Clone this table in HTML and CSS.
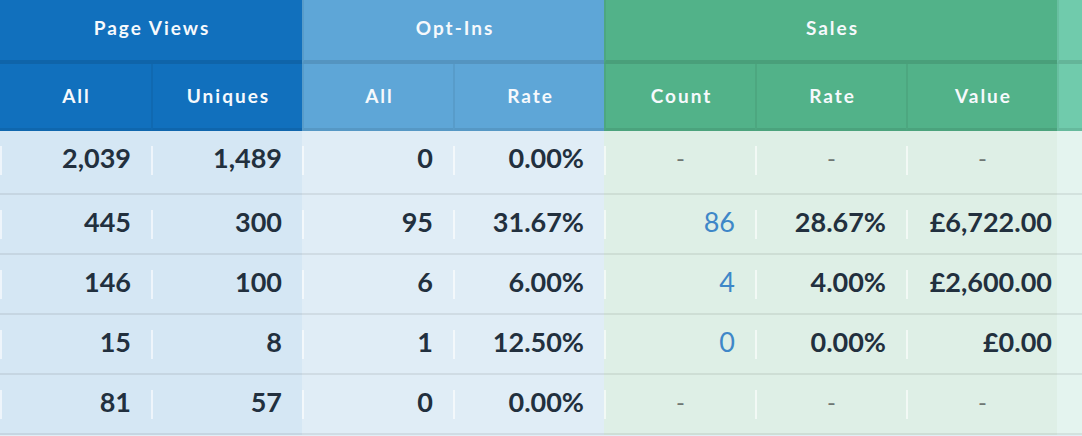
FILE: index.html
```html
<!DOCTYPE html>
<html lang="en">
<head>
<meta charset="utf-8">
<title>Funnel stats</title>
<link rel="stylesheet" href="styles.css">
</head>
<body>
<div class="stats">
  <div class="hrow groups">
    <div class="gh pv span2">Page Views</div>
    <div class="gh oi span2">Opt-Ins</div>
    <div class="gh sa span3">Sales</div>
    <div class="gh ex"></div>
  </div>
  <div class="hrow subs">
    <div class="sh pv">All</div>
    <div class="sh pv">Uniques</div>
    <div class="sh oi">All</div>
    <div class="sh oi">Rate</div>
    <div class="sh sa">Count</div>
    <div class="sh sa">Rate</div>
    <div class="sh sa">Value</div>
    <div class="sh ex"></div>
  </div>

  <div class="row first">
    <div class="cell pv"><span class="sep"></span><span class="val">2,039</span></div>
    <div class="cell pv"><span class="sep"></span><span class="val">1,489</span></div>
    <div class="cell oi"><span class="sep"></span><span class="val">0</span></div>
    <div class="cell oi"><span class="sep"></span><span class="val">0.00%</span></div>
    <div class="cell sa"><span class="sep"></span><span class="val dash">-</span></div>
    <div class="cell sa"><span class="sep"></span><span class="val dash">-</span></div>
    <div class="cell sa"><span class="sep"></span><span class="val dash">-</span></div>
    <div class="cell ex"></div>
  </div>
  <div class="row">
    <div class="cell pv"><span class="sep"></span><span class="val">445</span></div>
    <div class="cell pv"><span class="sep"></span><span class="val">300</span></div>
    <div class="cell oi"><span class="sep"></span><span class="val">95</span></div>
    <div class="cell oi"><span class="sep"></span><span class="val">31.67%</span></div>
    <div class="cell sa"><span class="sep"></span><span class="val link">86</span></div>
    <div class="cell sa"><span class="sep"></span><span class="val">28.67%</span></div>
    <div class="cell sa"><span class="sep"></span><span class="val money">£6,722.00</span></div>
    <div class="cell ex"></div>
  </div>
  <div class="row">
    <div class="cell pv"><span class="sep"></span><span class="val">146</span></div>
    <div class="cell pv"><span class="sep"></span><span class="val">100</span></div>
    <div class="cell oi"><span class="sep"></span><span class="val">6</span></div>
    <div class="cell oi"><span class="sep"></span><span class="val">6.00%</span></div>
    <div class="cell sa"><span class="sep"></span><span class="val link">4</span></div>
    <div class="cell sa"><span class="sep"></span><span class="val">4.00%</span></div>
    <div class="cell sa"><span class="sep"></span><span class="val money">£2,600.00</span></div>
    <div class="cell ex"></div>
  </div>
  <div class="row">
    <div class="cell pv"><span class="sep"></span><span class="val">15</span></div>
    <div class="cell pv"><span class="sep"></span><span class="val">8</span></div>
    <div class="cell oi"><span class="sep"></span><span class="val">1</span></div>
    <div class="cell oi"><span class="sep"></span><span class="val">12.50%</span></div>
    <div class="cell sa"><span class="sep"></span><span class="val link">0</span></div>
    <div class="cell sa"><span class="sep"></span><span class="val">0.00%</span></div>
    <div class="cell sa"><span class="sep"></span><span class="val money">£0.00</span></div>
    <div class="cell ex"></div>
  </div>
  <div class="row">
    <div class="cell pv"><span class="sep"></span><span class="val">81</span></div>
    <div class="cell pv"><span class="sep"></span><span class="val">57</span></div>
    <div class="cell oi"><span class="sep"></span><span class="val">0</span></div>
    <div class="cell oi"><span class="sep"></span><span class="val">0.00%</span></div>
    <div class="cell sa"><span class="sep"></span><span class="val dash">-</span></div>
    <div class="cell sa"><span class="sep"></span><span class="val dash">-</span></div>
    <div class="cell sa"><span class="sep"></span><span class="val dash">-</span></div>
    <div class="cell ex"></div>
  </div>
</div>
</body>
</html>
```

FILE: styles.css
```css
html, body {
  margin: 0;
  padding: 0;
  overflow: hidden;
  background: #e1eef6;
}

.stats {
  width: 1082px;
  font-family: Lato, "Open Sans", sans-serif;
  color: #22303e;
}

.hrow, .row {
  display: grid;
  grid-template-columns: repeat(7, 151px) 1fr;
}

.span2 { grid-column: span 2; }
.span3 { grid-column: span 3; }

/* header */
.gh, .sh {
  display: flex;
  align-items: center;
  justify-content: center;
  color: #f6f9fc;
  font-weight: 700;
  font-size: 19px;
  letter-spacing: 2px;
  box-sizing: border-box;
  border-left: 2px solid rgba(0, 0, 0, 0.06);
}
.gh:first-child, .sh:first-child { border-left: none; }

.gh {
  height: 64px;
  padding-bottom: 6px;
  border-bottom: 4px solid rgba(0, 0, 0, 0.1);
  padding-left: 2px;
}
.sh {
  height: 67px;
  padding-bottom: 2px;
  border-bottom: 3px solid rgba(0, 0, 0, 0.08);
  padding-left: 2px;
}

.gh.pv, .sh.pv { background: #1170bd; }
.gh.oi, .sh.oi { background: #5ea6d7; }
.gh.sa, .sh.sa { background: #52b289; }
.gh.ex, .sh.ex { background: #70cbac; }

/* body */
.cell {
  display: flex;
  align-items: center;
  height: 60px;
  box-sizing: border-box;
  border-bottom: 2px solid rgba(0, 0, 0, 0.07);
}
.row.first .cell {
  height: 64px;
  padding-bottom: 4px;
}

.cell.pv { background: #d5e7f4; }
.cell.oi { background: #e0edf6; }
.cell.sa { background: #deefe6; }
.cell.ex { background: #e4f4ef; }

.sep {
  flex: none;
  width: 2px;
  height: 29px;
  background: rgba(255, 255, 255, 0.6);
}

.val {
  margin-left: auto;
  padding-right: 20px;
  padding-bottom: 5px;
  font-size: 27px;
  font-weight: 700;
  line-height: 32px;
}

.val.money { padding-right: 5px; }

.val.link {
  font-weight: 400;
  color: #3e87c8;
}

.val.dash {
  margin-right: auto;
  padding-right: 0;
  font-weight: 400;
  font-size: 24px;
  color: #6f7774;
}
```
